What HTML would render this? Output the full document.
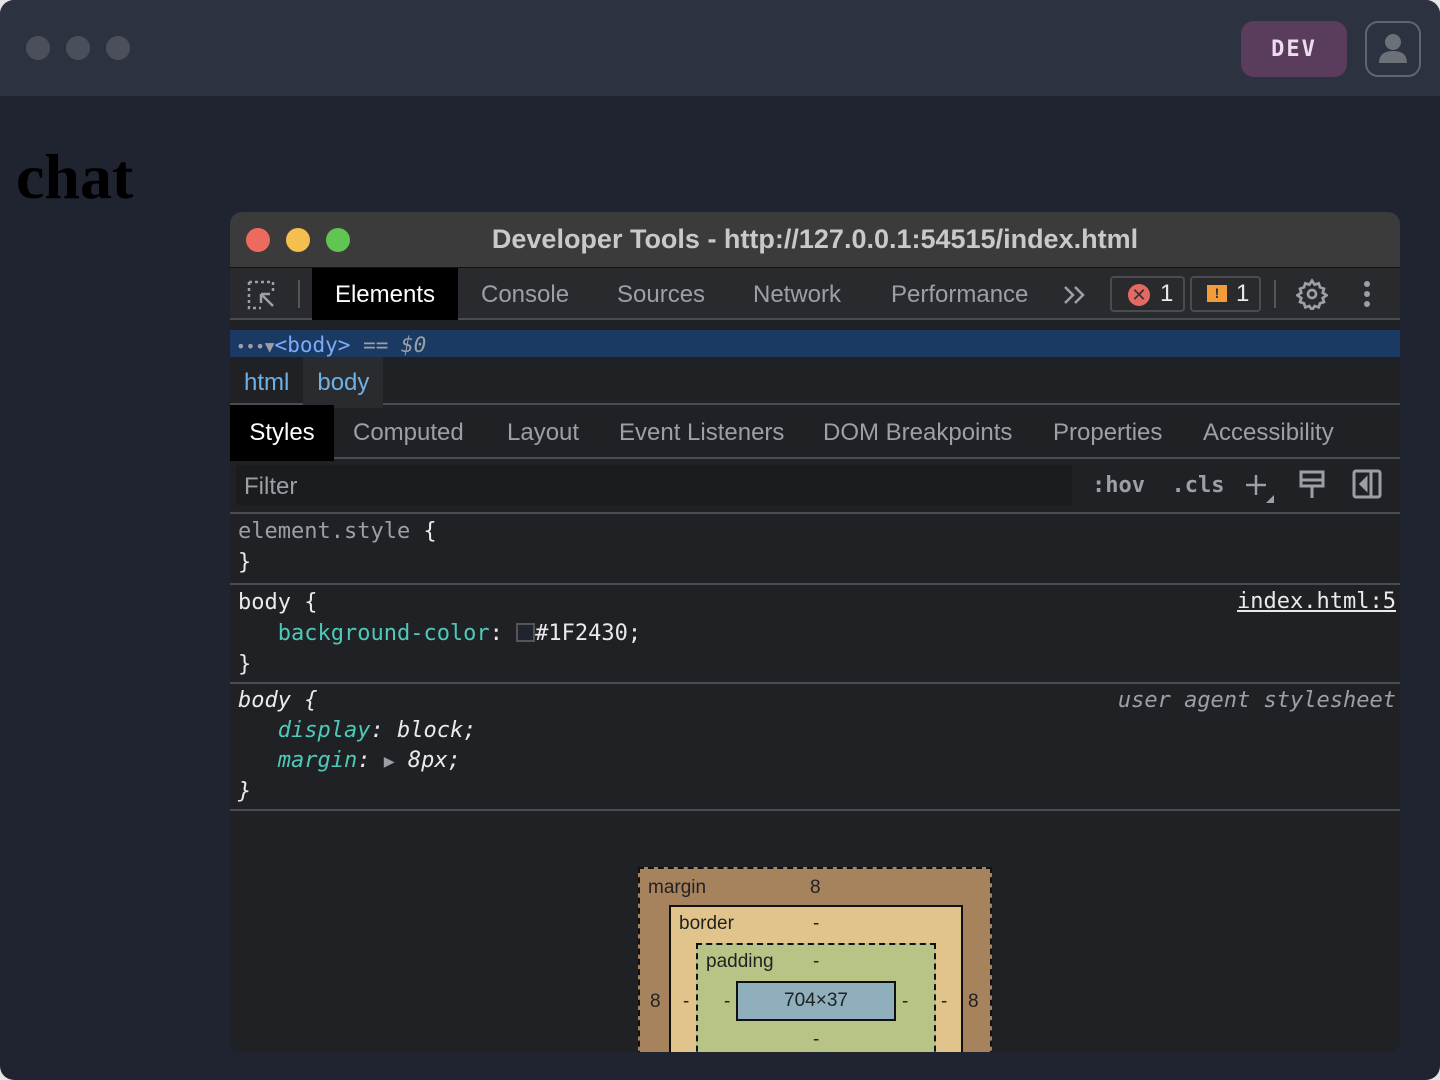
<!DOCTYPE html>
<html><head><meta charset="utf-8"><style>
*{box-sizing:border-box;margin:0;padding:0}
html,body{width:1440px;height:1080px;overflow:hidden;background:#e5e5e5}
.win{position:absolute;left:0;top:0;width:1440px;height:1080px;background:#1f2430;border-radius:14px;overflow:hidden;font-family:"Liberation Sans",sans-serif}
.top{position:absolute;left:0;top:0;width:1440px;height:96px;background:#2d3240}
.dot{position:absolute;top:36px;width:24px;height:24px;border-radius:50%;background:#4a4f5b}
.dev{position:absolute;left:1241px;top:21px;width:106px;height:56px;border-radius:13px;background:#5a3d5c;color:#ecdcf0;font:bold 22px "DejaVu Sans Mono","Liberation Mono",monospace;letter-spacing:2px;text-align:center;line-height:58px}
.user{position:absolute;left:1365px;top:21px;width:56px;height:56px;border:2px solid #5f6470;border-radius:13px}
h1{position:absolute;left:16px;top:140px;font:bold 64px "Liberation Serif",serif;color:#000}
.dt{position:absolute;left:230px;top:212px;width:1170px;height:840px;background:#202124;border-radius:12px 12px 10px 10px;overflow:hidden}
.tb{height:56px;background:#3b3b3b;position:relative;border-bottom:1px solid #111}
.tl{position:absolute;top:16px;width:24px;height:24px;border-radius:50%}
.title{position:absolute;left:0;right:0;top:0;line-height:54px;text-align:center;color:#c9c9c9;font-weight:bold;font-size:27px}
.bar{position:absolute;top:56px;left:0;width:1170px;height:52px;background:#292a2d;border-bottom:2px solid #494c50}
.tab{position:absolute;top:0;height:52px;line-height:54px;font-size:24px;color:#9aa0a6}
.sel{position:absolute;top:118px;left:0;width:1170px;height:27px;background:#1b3a63;color:#7cacf8;font:21px "DejaVu Sans Mono",monospace;line-height:30px;padding-left:6px}
.bc{position:absolute;top:146px;left:0;width:1170px;height:47px;border-bottom:2px solid #494c50;font-size:24px;color:#6fb1e4;line-height:49px}
.st{position:absolute;top:193px;left:0;width:1170px;height:54px;border-bottom:2px solid #494c50;font-size:24px;color:#9aa0a6;line-height:56px}
.flt{position:absolute;top:247px;left:0;width:1170px;height:55px;border-bottom:2px solid #494c50}
.code{font:22px "DejaVu Sans Mono",monospace;color:#e8eaed;position:absolute;left:8px}
.sec{position:absolute;left:0;width:1170px;border-bottom:2px solid #494c50}
.k{color:#4ec9b9}
.bm{position:absolute;left:408px;top:655px;width:354px;height:200px;background:#a6835c;border:2px dashed #111;font-size:19px;color:#222}
.bm span{position:absolute}
</style></head><body><div class="win">
<div class="top"></div>
<div class="dot" style="left:26px"></div><div class="dot" style="left:66px"></div><div class="dot" style="left:106px"></div>
<div class="dev">DEV</div>
<div class="user"><svg width="52" height="52" viewBox="0 0 52 52"><circle cx="26" cy="19" r="8" fill="#6b7079"/><path d="M12 40c0-9 6-12 14-12s14 3 14 12z" fill="#6b7079"/></svg></div>
<h1>chat</h1>
<div class="dt">
 <div class="tb">
  <div class="tl" style="left:16px;background:#ed6a5e"></div>
  <div class="tl" style="left:56px;background:#f5bf4f"></div>
  <div class="tl" style="left:96px;background:#61c554"></div>
  <div class="title">Developer Tools - http://127.0.0.1:54515/index.html</div>
 </div>
 <div class="bar">
  <svg style="position:absolute;left:16px;top:11px" width="32" height="32" viewBox="0 0 32 32" fill="none" stroke="#9aa0a6" stroke-width="2.5"><path d="M3 3h24v12" stroke-dasharray="3 3"/><path d="M3 3v26h12" stroke-dasharray="3 3"/><path d="M27 27L15 15M15 15v9M15 15h9"/></svg>
  <div style="position:absolute;left:68px;top:12px;width:2px;height:28px;background:#555"></div>
  <div class="tab" style="left:82px;width:146px;background:#000;color:#fff;text-align:center">Elements</div>
  <div class="tab" style="left:251px">Console</div>
  <div class="tab" style="left:387px">Sources</div>
  <div class="tab" style="left:523px">Network</div>
  <div class="tab" style="left:661px">Performance</div>
  <svg style="position:absolute;left:832px;top:16px" width="26" height="22" viewBox="0 0 26 22" fill="none" stroke="#9aa0a6" stroke-width="2.5"><path d="M3 3l8 8-8 8M13 3l8 8-8 8"/></svg>
  <div style="position:absolute;left:880px;top:8px;width:75px;height:36px;border:2px solid #4a4c50;border-radius:4px;color:#e8eaed;font-size:24px;line-height:32px"><span style="position:absolute;left:16px;top:6px;width:22px;height:22px;border-radius:50%;background:#e46962;color:#333;font-size:18px;line-height:22px;text-align:center">✕</span><span style="position:absolute;left:48px">1</span></div>
  <div style="position:absolute;left:960px;top:8px;width:71px;height:36px;border:2px solid #4a4c50;border-radius:4px;color:#e8eaed;font-size:24px;line-height:32px"><span style="position:absolute;left:15px;top:7px;width:20px;height:17px;background:#f29b38;color:#333;font-size:14px;line-height:17px;text-align:center;font-weight:bold">!</span><span style="position:absolute;left:44px">1</span></div>
  <div style="position:absolute;left:1044px;top:12px;width:2px;height:28px;background:#555"></div>
  <svg style="position:absolute;left:1066px;top:10px" width="32" height="32" viewBox="0 0 24 24" fill="none" stroke="#9aa0a6" stroke-width="2"><circle cx="12" cy="12" r="3"/><path d="M12 2l2 3 3-1 1 3 3 1-1 3 3 2-3 2 1 3-3 1-1 3-3-1-2 3-2-3-3 1-1-3-3-1 1-3-3-2 3-2-1-3 3-1 1-3 3 1z"/></svg>
  <svg style="position:absolute;left:1132px;top:12px" width="10" height="28" viewBox="0 0 10 28" fill="#9aa0a6"><circle cx="5" cy="4" r="3"/><circle cx="5" cy="14" r="3"/><circle cx="5" cy="24" r="3"/></svg>
 </div>
 <div class="sel"><span style="color:#9aa0a6;font-size:16px">•••</span><span style="color:#9aa0a6;font-size:16px">▼</span>&lt;body&gt; <span style="color:#9aa0a6">==</span> <i style="color:#9aa0a6">$0</i></div>
 <div class="bc"><span style="padding:0 14px">html</span><span style="background:#2a2b2e;padding:12px 14px">body</span></div>
 <div class="st"><span style="position:absolute;left:0;width:104px;background:#000;color:#fff;text-align:center">Styles</span><span style="position:absolute;left:123px">Computed</span><span style="position:absolute;left:277px">Layout</span><span style="position:absolute;left:389px">Event Listeners</span><span style="position:absolute;left:593px">DOM Breakpoints</span><span style="position:absolute;left:823px">Properties</span><span style="position:absolute;left:973px">Accessibility</span></div>
 <div class="flt">
  <div style="position:absolute;left:6px;top:6px;width:836px;height:40px;background:#1b1c1e;color:#9aa0a6;font-size:24px;line-height:44px;padding-left:8px">Filter</div>
  <div style="position:absolute;left:862px;top:14px;font:bold 22px 'DejaVu Sans Mono',monospace;color:#9aa0a6">:hov &nbsp;.cls</div>
  <svg style="position:absolute;left:1014px;top:14px" width="32" height="32" viewBox="0 0 32 32"><path d="M12 2v20M2 12h20" stroke="#9aa0a6" stroke-width="2.5"/><path d="M30 22v8h-8z" fill="#9aa0a6"/></svg>
  <svg style="position:absolute;left:1068px;top:10px" width="28" height="34" viewBox="0 0 28 34" fill="none" stroke="#9aa0a6" stroke-width="3"><rect x="3" y="3" width="22" height="14"/><path d="M3 11h22M14 17v12"/></svg>
  <svg style="position:absolute;left:1122px;top:10px" width="30" height="30" viewBox="0 0 30 30" fill="none" stroke="#9aa0a6" stroke-width="3"><rect x="2" y="2" width="26" height="26" rx="2"/><path d="M19 2v26"/><path d="M14 10l-5 5 5 5z" fill="#9aa0a6"/></svg>
 </div>
 <div class="sec" style="top:302px;height:71px"><div class="code" style="top:2px;line-height:31px"><span style="color:#9aa0a6">element.style</span> {<br>}</div></div>
 <div class="sec" style="top:373px;height:99px"><div class="code" style="top:2px;line-height:31px">body {<br>&nbsp;&nbsp;&nbsp;<span class="k">background-color</span>: <span style="display:inline-block;width:19px;height:19px;border:2px solid #555;background:#1f2430;vertical-align:-2px"></span>#1F2430;<br>}</div><div class="code" style="left:auto;right:4px;top:4px;text-decoration:underline">index.html:5</div></div>
 <div class="sec" style="top:472px;height:127px"><div class="code" style="top:2px;line-height:30px;font-style:italic">body {<br>&nbsp;&nbsp;&nbsp;<span class="k">display</span>: block;<br>&nbsp;&nbsp;&nbsp;<span class="k">margin</span>: <span style="color:#9aa0a6;font-style:normal;font-size:18px">▶</span> 8px;<br>}</div><div class="code" style="left:auto;right:4px;top:4px;font-style:italic;color:#9aa0a6">user agent stylesheet</div></div>
 <div class="bm">
  <span style="left:8px;top:8px">margin</span><span style="left:170px;top:8px">8</span>
  <span style="left:10px;top:122px">8</span><span style="left:328px;top:122px">8</span>
  <div style="position:absolute;left:29px;top:36px;width:294px;height:200px;background:#e0c48c;border:2px solid #111">
   <span style="left:8px;top:6px">border</span><span style="left:142px;top:6px">-</span>
   <span style="left:12px;top:84px">-</span><span style="left:270px;top:84px">-</span>
   <div style="position:absolute;left:25px;top:36px;width:240px;height:160px;background:#b8c486;border:2px dashed #111">
    <span style="left:8px;top:6px">padding</span><span style="left:115px;top:6px">-</span>
    <span style="left:26px;top:46px">-</span><span style="left:204px;top:46px">-</span><span style="left:115px;top:84px">-</span>
    <div style="position:absolute;left:38px;top:36px;width:160px;height:40px;background:#8eafbb;border:2px solid #111;text-align:center;line-height:36px">704×37</div>
   </div>
  </div>
 </div>
</div>
</div></body></html>
